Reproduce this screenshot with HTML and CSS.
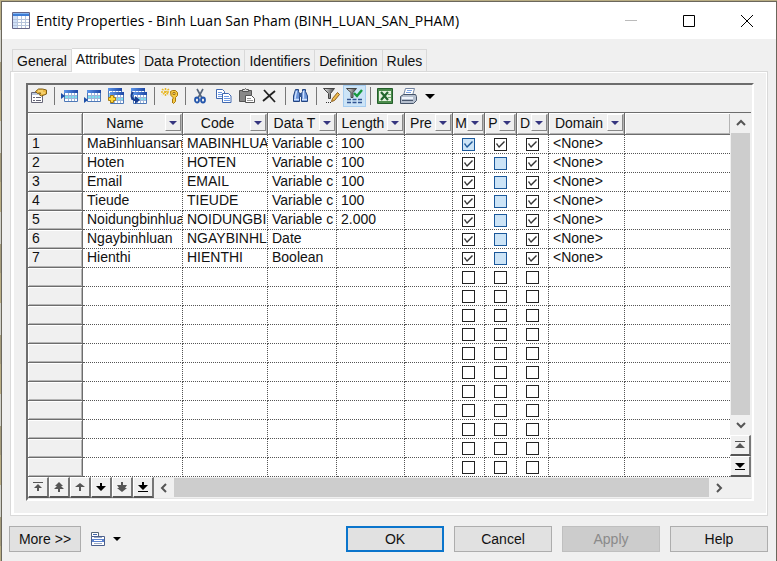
FILE: index.html
```html
<!DOCTYPE html>
<html lang="en">
<head>
<meta charset="utf-8">
<title>Entity Properties</title>
<link rel="stylesheet" href="styles.css">
</head>
<body>
<svg class="defs" aria-hidden="true">
  <defs>
    <linearGradient id="blue" x1="0" y1="0" x2="1" y2="0"><stop offset="0" stop-color="#5d96ea"/><stop offset="1" stop-color="#1d46a5"/></linearGradient>
    <linearGradient id="metal" x1="0" y1="0" x2="1" y2="0"><stop offset="0" stop-color="#eee"/><stop offset="1" stop-color="#444"/></linearGradient>
    <symbol id="sheet" viewBox="0 0 14 12">
      <path fill="#fff" stroke="#4d78b8" d="M.5.5h13v11H.5z"/>
      <path fill="url(#blue)" d="M0 0h14v3H0z"/>
      <path fill="#7be0ee" d="M1 5h12v3H1z"/>
      <path stroke="#9db6da" d="M1 5.500h12M1 8.500h12M4.500 3v8M7.500 3v8M10.500 3v8"/>
    </symbol>
  </defs>
</svg>
<main class="dialog">
  <header class="titlebar">
    <svg class="app-icon" viewBox="0 0 18 17" width="18" height="17" aria-hidden="true">
      <path fill="#fff" stroke="#668" d="M.5.5h17v16H.5z"/>
      <path fill="#3d7dd6" d="M1 1h16v3H1z"/><path fill="#86b6f0" d="M1 1h16v1H1z"/>
      <path fill="#cfe0f8" d="M1 4h4v12H1z"/>
      <path stroke="#b6c4dc" d="M1 7.500h16M1 10.500h16M1 13.500h16M5.500 4v12M9.500 4v12M13.500 4v12"/>
    </svg>
    <h1>Entity Properties - Binh Luan San Pham (BINH_LUAN_SAN_PHAM)</h1>
    <button class="win" aria-label="Minimize" disabled><svg viewBox="0 0 12 12" width="12" height="12"><path stroke="#bbb" d="M0 5.500h12"/></svg></button>
    <button class="win" aria-label="Maximize"><svg viewBox="0 0 12 12" width="12" height="12"><path fill="none" stroke="#000" d="M.5.5h11v11H.5z"/></svg></button>
    <button class="win" aria-label="Close"><svg viewBox="0 0 12 12" width="12" height="12"><path stroke="#000" d="M0 0l12 12M12 0L0 12"/></svg></button>
  </header>

  <nav class="tabs" role="tablist">
    <button role="tab">General</button>
    <button role="tab" class="active" aria-selected="true">Attributes</button>
    <button role="tab">Data Protection</button>
    <button role="tab">Identifiers</button>
    <button role="tab">Definition</button>
    <button role="tab">Rules</button>
  </nav>

  <section class="panel">
    <div class="frame">
      <div class="toolbar" role="toolbar">
        <button aria-label="Properties"><svg viewBox="0 0 17 16"><path fill="#fff" stroke="#667" d="M1.500 4.500h11v10h-11z"/><path fill="#bcc8dc" d="M2 5h10v2H2z"/><path stroke="#667" d="M3 9.500h2M6 9.500h5M3 12.500h2M6 12.500h5"/><path fill="#edb942" stroke="#806018" d="M5.500 3.500l3-2.500h4l4 1v4l-5 2-2-1 1-2-3 .5z"/><path stroke="#fce696" d="M8 3h5M11 5h4"/></svg></button>
        <i class="sep"></i>
        <button aria-label="Insert a Row"><svg viewBox="0 0 17 16"><use href="#sheet" x="3" y="2" width="14" height="12"/><path fill="#1c4fa8" d="M0 5l4 3-4 3z"/></svg></button>
        <button aria-label="Add a Row"><svg viewBox="0 0 17 16"><use href="#sheet" x="3" y="2" width="14" height="12"/><path fill="#1c4fa8" d="M0 9l4 3-4 3z"/></svg></button>
        <button aria-label="Add Attributes"><svg viewBox="0 0 17 16"><use href="#sheet" x="1" y="0" width="14" height="12"/><use href="#sheet" x="3" y="4" width="14" height="12"/><path fill="#ffd83c" stroke="#a87d10" d="M3.500 7.500h3v2h2v3h-2v2h-3v-2h-2v-3h2z"/></svg></button>
        <button aria-label="Reuse Attributes"><svg viewBox="0 0 17 16"><use href="#sheet" x="1" y="0" width="14" height="12"/><use href="#sheet" x="3" y="4" width="14" height="12"/><path fill="none" stroke="#173c91" stroke-width="2" d="M3 4c-3 4-1 8 3 8"/><path fill="#173c91" d="M5 8l5 4-5 4z"/></svg></button>
        <i class="sep"></i>
        <button aria-label="Create Identifier"><svg viewBox="0 0 17 16"><path stroke="#e8b828" stroke-width="1.500" stroke-dasharray="2 1" d="M1 1l7 6M8 1L1 7M4.500 0v8M0 4h9"/><path fill="#f5c945" stroke="#a9780d" fill-rule="evenodd" d="M9.500 3.500l2-1h3l2 2v3l-2 2v4l-2 2-1.500-1.500 1-1-1-1 1-1V9.500l-2-2zM12 4.500v2h2v-2z"/></svg></button>
        <i class="sep"></i>
        <button aria-label="Cut"><svg viewBox="0 0 17 16"><path stroke="#56657b" stroke-width="1.600" d="M5 1l5 9M11 1l-5 9"/><g fill="none" stroke="#2456ac" stroke-width="1.800"><ellipse cx="5" cy="12" rx="2" ry="2.500"/><ellipse cx="11" cy="12" rx="2" ry="2.500"/></g></svg></button>
        <button aria-label="Copy"><svg viewBox="0 0 17 16"><g fill="#fff" stroke="#4169b0"><path d="M1.500 1.500h6l2 2v7h-8z"/><path d="M7.500 5.500h6l2.500 2.500v6.500H7.500z"/></g><path stroke="#6d9ae5" d="M3 4.500h4M3 6.500h4M3 8.500h4M9 8.500h5M9 10.500h6M9 12.500h6"/></svg></button>
        <button aria-label="Paste"><svg viewBox="0 0 17 16"><path fill="#888" stroke="#555" d="M1.500 2.500h12v11h-12z"/><path fill="#ddd" stroke="#555" d="M4.500 3.500v-2h2l1-1 1 1h2v2z"/><path fill="#fff" stroke="#555" d="M7.500 7.500h6l3 3v4h-9z"/><path stroke="#999" d="M9 10.500h4M9 12.500h6"/></svg></button>
        <button aria-label="Delete"><svg viewBox="0 0 17 16"><path stroke="#222" stroke-width="1.800" d="M3 2l11 12M14 3L2 13"/></svg></button>
        <i class="sep"></i>
        <button aria-label="Find"><svg viewBox="0 0 17 16"><path fill="#6d95d8" stroke="#234480" d="M3.500 1.500h3v2l1 2v8h-6V8zM10.500 1.500h3v2l2 4.500v5.500h-6v-8l1-2z"/><path fill="#375994" d="M7 5h3v4H7z"/><path stroke="#cfe2ff" stroke-width="1.400" d="M4.500 3L3 10.500M11.500 3v7.500M2 11.500h5M10 11.500h5"/></svg></button>
        <i class="sep"></i>
        <button aria-label="Customize Columns and Filter"><svg viewBox="0 0 17 16"><path fill="url(#metal)" stroke="#444" d="M.5.5h11L7.500 5.500v5h-2v-5z"/><path fill="#f0bd50" stroke="#8b5d1d" d="M8.500 13.500l1-3 5-6 2 2-5 6z"/><path fill="#333" d="M3 14h1v1H3zM5 14h1v1H5zM7 14h1v1H7z"/></svg></button>
        <button class="pressed" aria-label="Enable/Disable Filter" aria-pressed="true"><svg viewBox="0 0 17 16"><path fill="url(#metal)" stroke="#444" d="M.5.5h10L7 4.500v5H5v-5z"/><path fill="none" stroke="#17993e" stroke-width="2.400" d="M8 5l3 3 5-6"/><path stroke="#315492" stroke-width="1.300" stroke-dasharray="4 1.500" d="M1 11.500h16M1 14.500h16"/></svg></button>
        <i class="sep"></i>
        <button aria-label="Export to Excel"><svg viewBox="0 0 17 16"><path fill="#4b8c4b" stroke="#245f2b" d="M.5.5h15v15H.5z"/><path fill="#e5f2df" d="M2 3h12v10H2z"/><path stroke="#23672d" stroke-width="2.200" d="M4 4l7 8M11 4l-7 8"/><path stroke="#6da86c" d="M11 6.500h3M11 9.500h3"/></svg></button>
        <button aria-label="Print"><svg viewBox="0 0 17 16"><path fill="#fff" stroke="#7283a0" d="M5.500.5h9l-2 7h-9z"/><path stroke="#7aa3e4" d="M7 2.500h5M6 4.500h5"/><path fill="#b5bfce" stroke="#465469" d="M.5 8.500l3-2h12l1 2v4l-3 3H.5z"/><path fill="#eff4fc" d="M2 9h11v2H2z"/><path stroke="#4a586e" d="M2 12.500h11"/></svg></button>
        <button aria-label="Print options"><svg viewBox="0 0 17 16"><path d="M2 6h10l-5 5z"/></svg></button>
      </div>

      <div class="grid">
        <div class="view">
          <table>
            <colgroup><col class="c-num"><col class="c-name"><col class="c-code"><col class="c-type"><col class="c-len"><col class="c-pre"><col class="c-chk"><col class="c-chk"><col class="c-chk"><col class="c-dom"><col></colgroup>
            <thead><tr id="head"></tr></thead>
            <tbody id="rows"></tbody>
          </table>
          <div class="vbar">
            <button class="arrow" aria-label="Scroll up"><svg viewBox="0 0 10 10" width="10" height="10"><path fill="none" stroke="#555" stroke-width="2" d="M1 7l4-4 4 4"/></svg></button>
            <div class="thumb"></div>
            <button class="arrow" aria-label="Scroll down"><svg viewBox="0 0 10 10" width="10" height="10"><path fill="none" stroke="#555" stroke-width="2" d="M1 3l4 4 4-4"/></svg></button>
            <button class="step" aria-label="First page"><svg viewBox="0 0 10 10" width="10" height="10"><path fill="#555" d="M0 1h10v1H0zM5 3l5 5H0z"/></svg></button>
            <button class="step" aria-label="Last page"><svg viewBox="0 0 10 10" width="10" height="10"><path d="M0 2h10L5 7zM0 8h10v1H0z"/></svg></button>
          </div>
        </div>
        <div class="hbar">
          <button class="step" aria-label="Move to top"><svg viewBox="0 0 10 10" width="10" height="10"><path fill="#555" d="M0 0h10v1H0zM5 2l4 4H6v3H4V6H1z"/></svg></button>
          <button class="step" aria-label="Move up a page"><svg viewBox="0 0 10 10" width="10" height="10"><path fill="#555" d="M5 0l4 4H7l3 3H6v3H4V7H0l3-3H1z"/></svg></button>
          <button class="step" aria-label="Move up"><svg viewBox="0 0 10 10" width="10" height="10"><path fill="#555" d="M5 1l5 4H6v4H4V5H0z"/></svg></button>
          <button class="step" aria-label="Move down"><svg viewBox="0 0 10 10" width="10" height="10"><path d="M4 1h2v3h4L5 9 0 4h4z"/></svg></button>
          <button class="step" aria-label="Move down a page"><svg viewBox="0 0 10 10" width="10" height="10"><path fill="#555" d="M4 0h2v3h4L8 6h2l-5 4-5-4h2L0 3h4z"/></svg></button>
          <button class="step" aria-label="Move to bottom"><svg viewBox="0 0 10 10" width="10" height="10"><path d="M4 0h2v3h4L5 8 0 3h4zM0 9h10v1H0z"/></svg></button>
          <button class="arrow" aria-label="Scroll left"><svg viewBox="0 0 10 10" width="10" height="10"><path fill="none" stroke="#555" stroke-width="2" d="M7 1L3 5l4 4"/></svg></button>
          <div class="thumb"></div>
          <button class="arrow" aria-label="Scroll right"><svg viewBox="0 0 10 10" width="10" height="10"><path fill="none" stroke="#555" stroke-width="2" d="M3 1l4 4-4 4"/></svg></button>
          <div class="corner"></div>
        </div>
      </div>
    </div>
  </section>

  <footer class="actions">
    <button class="btn more">More &gt;&gt;</button>
    <button class="menu" aria-label="Menu"><svg viewBox="0 0 30 16" width="30" height="16"><path fill="#fff" stroke="#567" d="M.5 1.500h7v4h-7z"/><path stroke="#456bb0" d="M2 3.500h4"/><path fill="#fff" stroke="#4a5f8d" d="M.5 5.500h13v9H.5z"/><path fill="#5c83cf" d="M1 8h12v3H1z"/><path stroke="#9aa9c4" d="M3 6.500h8M3 12.500h8"/><path stroke="#fff" d="M3 9.500h8"/><path d="M22 6h8l-4 4z"/></svg></button>
    <span class="spacer"></span>
    <button class="btn primary">OK</button>
    <button class="btn">Cancel</button>
    <button class="btn" disabled>Apply</button>
    <button class="btn">Help</button>
  </footer>
</main>
<script src="script.js"></script>
</body>
</html>
```
FILE: styles.css
```css
* { box-sizing: border-box; }

body {
  margin: 0;
  min-height: 100vh;
  display: flex;
  padding: 1px 0 0 1px;
  background: repeating-linear-gradient(#b9ad83 0 30px, #d0d0c8 30px 62px, #a49b7c 62px 91px);
  font-family: "Liberation Sans", Arial, sans-serif;
  font-size: 14px;
  color: #111;
}

button {
  font: inherit;
  color: inherit;
  margin: 0;
  padding: 0;
  border: 0;
  background: none;
}

svg { display: block; }
.defs { position: absolute; width: 0; height: 0; }

.dialog {
  flex: 1;
  min-width: 0;
  display: flex;
  flex-direction: column;
  background: #f0f0f0;
  border: 1px solid #6b675c;
  border-bottom: 0;
}

/* Title bar */
.titlebar {
  display: flex;
  align-items: center;
  height: 37px;
  padding-left: 10px;
  background: #fff;
}
.titlebar h1 {
  flex: 1;
  min-width: 0;
  margin: 0 0 0 6px;
  font: 400 14px/24px "Open Sans", "Noto Sans", sans-serif;
  color: #000;
  white-space: nowrap;
}
.win {
  width: 58px;
  height: 37px;
  display: grid;
  place-items: center;
}

/* Tabs */
.tabs {
  display: flex;
  align-items: flex-end;
  height: 32px;
  padding-left: 10px;
}
.tabs button {
  height: 22px;
  padding: 0 4px;
  border: 1px solid #d9d9d9;
  border-width: 1px 1px 0 0;
  white-space: nowrap;
}
.tabs button:first-child { border-left-width: 1px; }
.tabs .active {
  position: relative;
  height: 24px;
  padding: 0 4px 4px;
  margin-bottom: -1px;
  background: #fff;
}

/* Tab page */
.panel {
  margin: 0 8px;
  padding: 11px 13px 14px 15px;
  border: 1px solid #d9d9d9;
  box-shadow: inset 3px 1px 0 #fff, inset -1px -2px 0 #fff;
}
.frame {
  border: 2px solid #6d6d6d;
  border-right-color: #fff;
  border-bottom-color: #fff;
}
.toolbar {
  display: flex;
  height: 27px;
  margin-left: -1px;
}
.toolbar button {
  width: 23px;
  height: 22px;
  display: grid;
  place-items: center;
}
.toolbar svg { width: 17px; height: 16px; }
.toolbar .pressed { background: #cce4f7; box-shadow: inset 0 0 0 1px #a6cdf0; }
.sep {
  width: 1px;
  height: 18px;
  margin: 2px 3px 0 4px;
  background: #777;
}

/* Attribute grid */
.grid {
  margin-right: 1px;
  border-top: 1px solid #6d6d6d;
  border-bottom: 1px solid #e3e3e3;
}
.view { display: flex; }
table {
  flex: 1;
  min-width: 0;
  width: 100%;
  table-layout: fixed;
  border-collapse: separate;
  border-spacing: 0;
  background: #fff;
}
.c-num { width: 55px; }
.c-name { width: 100px; }
.c-code { width: 85px; }
.c-type { width: 69px; }
.c-len { width: 68px; }
.c-pre { width: 48px; }
.c-chk { width: 32px; }
.c-dom { width: 76px; }

th, td {
  height: 19px;
  padding: 0 0 0 4px;
  overflow: hidden;
  white-space: nowrap;
  line-height: 17px;
  font-weight: 400;
  text-align: left;
  vertical-align: top;
}
td {
  border-right: 1px dotted #555;
  border-bottom: 1px dotted #555;
}
td:last-child { border-right: 0; }
td.check { padding: 3px 0 0 9px; }
th {
  background: #f0f0f0;
  border-right: 1px solid #6d6d6d;
  border-bottom: 1px solid #6d6d6d;
  box-shadow: inset 1px 1px 0 #fff, inset -1px -1px 0 #b4b4b4;
}
thead th { height: 22px; padding-left: 2px; }
thead th:last-child { border-right: 0; }
.head { display: flex; height: 20px; }
.head span {
  flex: 1;
  min-width: 0;
  overflow: hidden;
  line-height: 20px;
  text-align: center;
}
.filter {
  width: 16px;
  height: 17px;
  margin: 1px 1px 0 0;
  display: grid;
  place-items: center;
  background: #eee;
  border: 1px solid #fff;
  border-right-color: #888;
  border-bottom-color: #888;
}

input[type="checkbox"] {
  appearance: none;
  display: block;
  width: 13px;
  height: 13px;
  margin: 0;
  border: 1px solid #222;
  background: #fff;
}
input[type="checkbox"]:checked::after {
  content: "";
  display: block;
  height: 11px;
  background: #333;
  clip-path: polygon(1px 5px, 2px 4px, 4px 7px, 9px 2px, 10px 3px, 4px 9px);
}
input[type="checkbox"].changed {
  border-color: #1a5799;
  background: #cce4f7;
}
input[type="checkbox"].changed::after { background: #1a5799; }

/* Scroll bars */
.vbar {
  width: 21px;
  display: flex;
  flex-direction: column;
}
.arrow, .step { display: grid; place-items: center; }
.thumb { flex: 1; background: #cdcdcd; }
.vbar .thumb { margin: 0 1px; }
.vbar .arrow { height: 20px; }
.vbar .step { height: 21px; }
.step {
  width: 21px;
  border: 1px solid #fff;
  border-right: 2px solid #777;
  border-bottom: 2px solid #555;
}
.hbar { display: flex; height: 21px; }
.hbar .arrow { width: 20px; }
.hbar .thumb { margin: 1px 0; }
.corner { width: 22px; }

/* Dialog buttons */
.actions {
  display: flex;
  gap: 10px;
  padding: 10px 8px 9px 7px;
}
.btn {
  width: 98px;
  height: 26px;
  background: #e1e1e1;
  border: 1px solid #adadad;
}
.btn.more { width: 72px; }
.btn.primary { border: 2px solid #0b75cc; }
.btn:disabled { background: #ccc; border-color: #bfbfbf; color: #8a8a8a; }
.menu { display: grid; place-items: center; }
.spacer { flex: 1; }
```
FILE: script.js
```js
const columns = ["Name", "Code", "Data T", "Length", "Pre", "M", "P", "D", "Domain"];

const attributes = [
  ["MaBinhluansan", "MABINHLUA", "Variable c", "100"],
  ["Hoten", "HOTEN", "Variable c", "100"],
  ["Email", "EMAIL", "Variable c", "100"],
  ["Tieude", "TIEUDE", "Variable c", "100"],
  ["Noidungbinhlua", "NOIDUNGBI", "Variable c", "2.000"],
  ["Ngaybinhluan", "NGAYBINHL", "Date", ""],
  ["Hienthi", "HIENTHI", "Boolean", ""],
];

const ROW_COUNT = 18;

const arrow = '<svg viewBox="0 0 8 4" width="8" height="4"><path fill="#35357f" d="M0 0h8L4 4z"/></svg>';

document.getElementById("head").innerHTML =
  "<th></th>" +
  columns.map((c) => `<th><div class="head"><span>${c}</span><button class="filter" aria-label="Filter ${c}">${arrow}</button></div></th>`).join("") +
  "<th></th>";

function check(row, name, checked, changed) {
  return `<td class="check"><input type="checkbox" aria-label="${name} row ${row}"${checked ? " checked" : ""}${changed ? ' class="changed"' : ""}></td>`;
}

let html = "";
for (let i = 0; i < ROW_COUNT; i++) {
  const a = attributes[i];
  const n = i + 1;
  const text = a || ["", "", "", ""];
  html += `<tr><th>${a ? n : ""}</th>` + text.map((t) => `<td>${t}</td>`).join("") + "<td></td>" +
    check(n, "M", a, i === 0) +
    check(n, "P", i === 0, a && i > 0) +
    check(n, "D", a, false) +
    `<td>${a ? "&lt;None&gt;" : ""}</td><td></td></tr>`;
}
document.getElementById("rows").innerHTML = html;
```
